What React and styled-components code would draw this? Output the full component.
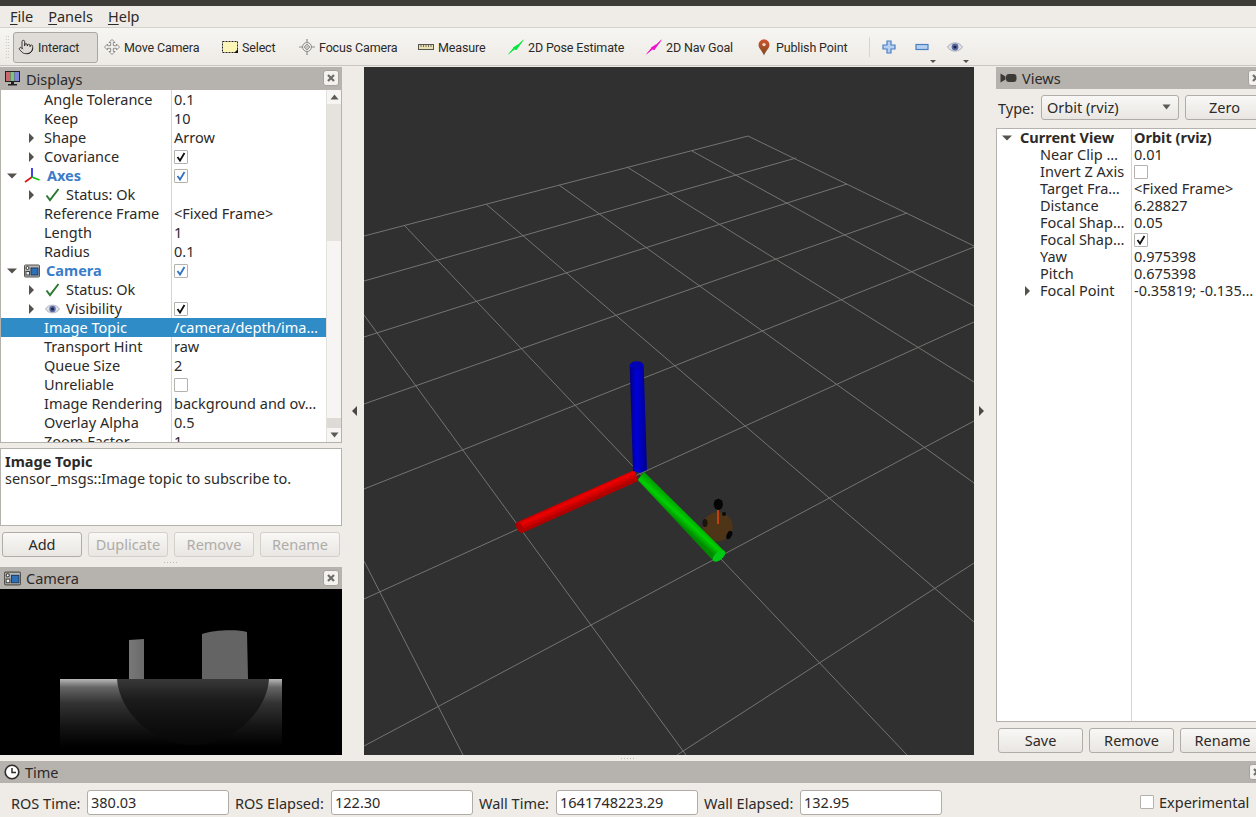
import React from "react";
import styled, { createGlobalStyle } from "styled-components";
import { Pointer } from "lucide-react";

const FONT = `"Noto Sans", "Open Sans", "Liberation Sans", sans-serif`;

const GlobalStyle = createGlobalStyle`
  html, body {
    margin: 0;
    background: #efece7;
  }
`;

const Window = styled.div`
  width: 1256px;
  height: 817px;
  overflow: hidden;
  display: flex;
  flex-direction: column;
  background: #efece7;
  color: #2c2a28;
  font-family: ${FONT};
  font-size: 14.5px;
`;

const TitleStrip = styled.div`
  height: 6px;
  flex: none;
  background: #3d3c37;
`;

const MenuBar = styled.div`
  height: 22px;
  box-sizing: border-box;
  flex: none;
  display: flex;
  align-items: center;
  gap: 15px;
  padding-left: 10px;
  border-bottom: 1px solid #d6d3ce;
  line-height: 21px;
`;

const Mnemonic = styled.span`
  text-decoration: underline;
  text-underline-offset: 2px;
`;

const Toolbar = styled.div`
  height: 38px;
  box-sizing: border-box;
  flex: none;
  display: flex;
  align-items: center;
  padding: 1px 0 0 5px;
  background: linear-gradient(#f7f5f2, #eeebe6);
  border-bottom: 1px solid #c9c5c0;
  font-family: Roboto, ${FONT};
  font-size: 12.5px;
  letter-spacing: -0.15px;
`;

const Grip = styled.div`
  width: 4px;
  height: 24px;
  margin-right: 4px;
  background-image: radial-gradient(#bdb9b4 0.7px, transparent 0.8px);
  background-size: 2.5px 3px;
`;

const ToolButton = styled.div`
  width: ${(p) => p.$w}px;
  height: ${(p) => (p.$active ? 31 : 30)}px;
  box-sizing: border-box;
  flex: none;
  display: flex;
  align-items: center;
  gap: 4px;
  padding-left: ${(p) => (p.$active ? 4 : 5)}px;
  border: ${(p) => (p.$active ? "1px solid #aaa7a2" : "none")};
  border-radius: 3px;
  background: ${(p) => (p.$active ? "#dfdcd8" : "transparent")};
  margin-right: ${(p) => (p.$active ? 1 : 0)}px;
  white-space: nowrap;
  svg {
    flex: none;
  }
`;

const ToolSeparator = styled.div`
  width: 1px;
  height: 20px;
  margin: 0 12px 0 5px;
  background: #d8d5d0;
`;

const ViewTool = styled.div`
  position: relative;
  width: ${(p) => p.$w}px;
  height: 30px;
  flex: none;
  display: flex;
  align-items: center;
`;

const DropMark = styled.span`
  position: absolute;
  right: ${(p) => p.$right}px;
  top: 28px;
  border-left: 3px solid transparent;
  border-right: 3px solid transparent;
  border-top: 3px solid #55524e;
`;

const Main = styled.div`
  height: 688px;
  flex: none;
  margin-top: 1px;
  display: flex;
`;

const LeftColumn = styled.div`
  width: 342px;
  flex: none;
  display: flex;
  flex-direction: column;
`;

const RightColumn = styled.div`
  width: 270px;
  flex: none;
  display: flex;
  flex-direction: column;
`;

const DockTitle = styled.div`
  height: ${(p) => p.$h || 22}px;
  flex: none;
  display: flex;
  align-items: center;
  gap: 5px;
  padding-left: 4px;
  background: #b6b2ae;
  position: relative;
`;

const CloseBox = styled.div`
  position: absolute;
  right: ${(p) => p.$right}px;
  top: 3px;
  width: 16px;
  height: 16px;
  box-sizing: border-box;
  display: flex;
  align-items: center;
  justify-content: center;
  background: #f4f2ef;
  border: 1px solid #a5a19c;
  border-radius: 3px;
`;

const TreeFrame = styled.div`
  height: 353px;
  flex: none;
  display: flex;
  box-sizing: border-box;
  border: solid #b5b2ad;
  border-width: 0 1px 1px 1px;
  background: #fff;
  overflow: hidden;
`;

const TreeBody = styled.div`
  flex: 1;
  min-width: 0;
  background: linear-gradient(#d8d5d1, #d8d5d1) 170px 0 / 1px 100% no-repeat;
`;

const Row = styled.div`
  height: 19px;
  line-height: 19px;
  display: grid;
  grid-template-columns: 170px 1fr;
  align-items: center;
  background: ${(p) => (p.$selected ? "#308cc6" : "transparent")};
  color: ${(p) => (p.$selected ? "#fff" : "inherit")};
  white-space: nowrap;
`;

const NameCell = styled.div`
  position: relative;
  display: flex;
  align-items: center;
  gap: ${(p) => p.$gap || 0}px;
  padding-left: ${(p) => p.$indent}px;
  font-weight: ${(p) => (p.$blue ? 700 : 400)};
  color: ${(p) => (p.$blue ? "#3b7cc9" : "inherit")};
`;

const ValueCell = styled.div`
  padding-left: 3px;
  display: flex;
  align-items: center;
  font-weight: ${(p) => (p.$bold ? 700 : 400)};
`;

const ExpandMark = styled.span`
  position: absolute;
  left: ${(p) => p.$left}px;
  top: 50%;
  transform: translateY(-50%);
  ${(p) =>
    p.$open
      ? `border-left: 5px solid transparent;
         border-right: 5px solid transparent;
         border-top: 5px solid #55524e;`
      : `border-top: 5px solid transparent;
         border-bottom: 5px solid transparent;
         border-left: 5px solid #55524e;`}
`;

const Box = styled.span`
  width: 14px;
  height: 14px;
  box-sizing: border-box;
  display: inline-flex;
  align-items: center;
  justify-content: center;
  background: #fff;
  border: 1px solid #b5b2ad;
  border-radius: 1px;
`;

const Scrollbar = styled.div`
  width: 14px;
  flex: none;
  display: flex;
  flex-direction: column;
  border-left: 1px solid #e4e1dd;
  background: #f6f5f3;
`;

const ScrollEnd = styled.div`
  height: 14px;
  flex: none;
  display: flex;
  align-items: center;
  justify-content: center;
`;

const ScrollThumb = styled.div`
  height: ${(p) => p.$h}px;
  flex: none;
  background: ${(p) => p.$color};
`;

const ScrollTrack = styled.div`
  flex: 1;
`;

const Description = styled.div`
  height: 78px;
  flex: none;
  margin-top: 5px;
  box-sizing: border-box;
  padding: 4px 4px;
  background: #fff;
  border: 1px solid #b5b2ad;
  line-height: 17px;
`;

const Bold = styled.div`
  font-weight: 700;
`;

const ButtonRow = styled.div`
  display: flex;
  gap: 6px;
  padding: ${(p) => p.$pad};
  flex: none;
`;

const Button = styled.div`
  width: ${(p) => p.$w || 80}px;
  height: 25px;
  box-sizing: border-box;
  flex: none;
  display: flex;
  align-items: center;
  justify-content: center;
  padding-bottom: 2px;
  border: 1px solid ${(p) => (p.$disabled ? "#d3d0cb" : "#b0ada8")};
  border-radius: 3px;
  background: linear-gradient(#f9f8f6, #e9e6e2);
  color: ${(p) => (p.$disabled ? "#aeaca8" : "inherit")};
`;

const Splitter = styled.div`
  width: 22px;
  box-sizing: border-box;
  flex: none;
  display: flex;
  align-items: center;
  justify-content: ${(p) => (p.$pad ? "flex-start" : "center")};
  padding-left: ${(p) => p.$pad || 3}px;
`;

const SplitArrow = styled.span`
  border-top: 5px solid transparent;
  border-bottom: 5px solid transparent;
  ${(p) => (p.$right ? "border-left" : "border-right")}: 5px solid #4a4844;
`;

const ViewPort = styled.div`
  width: 610px;
  flex: none;
  background: #303030;
  svg {
    display: block;
  }
`;

const HGrip = styled.div`
  height: ${(p) => p.$h}px;
  flex: none;
  display: flex;
  align-items: center;
  justify-content: center;
  &::after {
    content: "";
    width: 16px;
    height: 1px;
    background-image: radial-gradient(#bdb9b4 0.7px, transparent 0.8px);
    background-size: 3px 1px;
  }
`;

const DepthImage = styled.div`
  height: 166px;
  flex: none;
  background: #000;
  svg {
    display: block;
  }
`;

const TypeRow = styled.div`
  height: 37px;
  flex: none;
  display: flex;
  align-items: center;
  padding: 0 0 0 2px;
`;

const TypeLabel = styled.span`
  width: 43px;
  flex: none;
`;

const Combo = styled.div`
  width: 138px;
  height: 25px;
  box-sizing: border-box;
  flex: none;
  display: flex;
  align-items: center;
  justify-content: space-between;
  padding: 0 7px 2px 5px;
  margin-right: 6px;
  border: 1px solid #b0ada8;
  border-radius: 3px;
  background: linear-gradient(#f9f8f6, #e9e6e2);
`;

const ViewsTree = styled.div`
  flex: 1;
  margin-top: 2px;
  box-sizing: border-box;
  border: 1px solid #b5b2ad;
  border-right: none;
  background: linear-gradient(#d8d5d1, #d8d5d1) 134px 0 / 1px 100% no-repeat #fff;
`;

const ViewRow = styled.div`
  height: 17px;
  line-height: 17px;
  display: grid;
  grid-template-columns: 134px 1fr;
  align-items: center;
  white-space: nowrap;
`;

const TimeBar = styled.div`
  height: 34px;
  box-sizing: border-box;
  flex: none;
  display: flex;
  align-items: center;
  padding: 4px 0 0 11px;
`;

const FieldLabel = styled.span`
  width: ${(p) => p.$w}px;
  flex: none;
  padding-top: 1px;
  white-space: nowrap;
`;

const FieldInput = styled.div`
  width: 142px;
  height: 25px;
  box-sizing: border-box;
  flex: none;
  margin-right: 6px;
  padding-left: 3px;
  line-height: 23px;
  background: #fff;
  border: 1px solid #b0ada8;
  border-radius: 3px;
`;

const Experimental = styled.label`
  display: flex;
  align-items: center;
  gap: 5px;
  margin-left: 192px;
  white-space: nowrap;
`;

const Check = ({ color = "#111" }) => (
  <svg width="12" height="12" viewBox="0 0 12 12">
    <path d="M2.5 6 L5 9.5 L9.5 2" fill="none" stroke={color} strokeWidth="1.8" />
  </svg>
);

const CloseGlyph = () => (
  <svg width="10" height="10" viewBox="0 0 10 10">
    <path d="M2 2 L8 8 M8 2 L2 8" stroke="#6f6c68" strokeWidth="2.2" />
  </svg>
);

const MonitorIcon = () => (
  <svg width="17" height="17" viewBox="0 0 17 17">
    <rect x="1" y="1" width="15" height="11" fill="#222" />
    <rect x="2" y="2" width="4.5" height="9" fill="#c7696f" />
    <rect x="6.5" y="2" width="4" height="9" fill="#7dc47f" />
    <rect x="10.5" y="2" width="4.5" height="9" fill="#7f86d8" />
    <path d="M7 12h3v2h3v1.5H4V14h3z" fill="#222" />
  </svg>
);

const CameraIcon = ({ size = 16 }) => (
  <svg width={size} height={size} viewBox="0 0 16 16">
    <rect x="0.5" y="2" width="15" height="12" rx="1" fill="#b9b7b3" stroke="#55534f" />
    <rect x="7" y="5" width="7" height="7" fill="#2f6fb5" stroke="#1d3d63" />
    <circle cx="3.5" cy="5" r="1.5" fill="#fff" stroke="#333" />
    <rect x="2" y="8.5" width="3.5" height="3.5" fill="#eee" stroke="#444" />
  </svg>
);

const AxesIcon = () => (
  <svg width="17" height="17" viewBox="0 0 17 17">
    <path d="M8 10 L8 1" stroke="#1616e0" strokeWidth="1.6" />
    <path d="M8 10 L1 15" stroke="#e01010" strokeWidth="1.6" />
    <path d="M8 10 L15.5 13" stroke="#10c010" strokeWidth="1.6" />
  </svg>
);

const StatusCheck = () => (
  <svg width="15" height="15" viewBox="0 0 15 15">
    <path d="M1.5 8.5 L5 13 L13.5 2" fill="none" stroke="#2c7a32" strokeWidth="2" />
  </svg>
);

const EyeIcon = ({ w = 16 }) => (
  <svg width={w} height="12" viewBox="0 0 16 12">
    <path d="M0.5 6 C4 0.5 12 0.5 15.5 6 C12 11.5 4 11.5 0.5 6z" fill="#dfe1e8" stroke="#a9adba" />
    <circle cx="8" cy="6" r="3.4" fill="#5a6aa5" />
    <circle cx="8" cy="6" r="1.6" fill="#1d2440" />
  </svg>
);

const MoveIcon = () => (
  <svg width="16" height="16" viewBox="0 0 16 16">
    <path
      d="M8 .5 L11 3.5 H9.3 V6.7 H12.5 V5 L15.5 8 L12.5 11 V9.3 H9.3 V12.5 H11 L8 15.5 L5 12.5 H6.7 V9.3 H3.5 V11 L.5 8 L3.5 5 V6.7 H6.7 V3.5 H5z"
      fill="#f4f4f2"
      stroke="#85837f"
      strokeWidth="0.9"
    />
  </svg>
);

const SelectIcon = () => (
  <svg width="16" height="16" viewBox="0 0 16 16">
    <rect x="0.5" y="2.5" width="15" height="11" fill="#fbf6b8" stroke="#222" strokeDasharray="2 1" />
    <path d="M12 14 L16 14 L16 10z" fill="#111" />
  </svg>
);

const FocusIcon = () => (
  <svg width="16" height="16" viewBox="0 0 16 16">
    <path d="M8 0 L8 16 M0 8 L16 8" stroke="#8d8b87" strokeWidth="1.2" />
    <circle cx="8" cy="8" r="4.5" fill="#eeeeec" stroke="#8d8b87" />
    <path d="M8 5 L11 8 L8 11 L5 8z" fill="#c5c3bf" stroke="#85837f" strokeWidth="0.7" />
  </svg>
);

const MeasureIcon = () => (
  <svg width="16" height="16" viewBox="0 0 16 16">
    <rect x="0.5" y="5.5" width="15" height="5" fill="#e9dfb0" stroke="#55534f" />
    <path d="M3 6 V8 M5.5 6 V8 M8 6 V8 M10.5 6 V8 M13 6 V8" stroke="#55534f" strokeWidth="0.8" />
  </svg>
);

const ArrowIcon = ({ color }) => (
  <svg width="16" height="16" viewBox="0 0 16 16">
    <path d="M0.5 15 L6 8 L6.5 10 L13 3 L15.5 1 L13.5 4 L8.5 11 L6.5 10.5z" fill={color} />
    <path d="M0.5 15 L15.5 1" stroke={color} strokeWidth="0.9" />
    <path d="M5 8.5 L10.5 5 L8 11z" fill={color} />
  </svg>
);

const PinIcon = () => (
  <svg width="16" height="17" viewBox="0 0 16 17">
    <defs>
      <linearGradient id="pinFill" x1="0" y1="0" x2="0" y2="1">
        <stop offset="0" stopColor="#d0532b" />
        <stop offset="1" stopColor="#7a4a22" />
      </linearGradient>
    </defs>
    <path d="M8 16.5 C6 11.5 2.5 9.5 2.5 5.8 A5.5 5.5 0 0 1 13.5 5.8 C13.5 9.5 10 11.5 8 16.5z" fill="url(#pinFill)" />
    <circle cx="8" cy="5.6" r="1.7" fill="#f0d8c8" />
  </svg>
);

const PlusIcon = () => (
  <svg width="14" height="14" viewBox="0 0 14 14">
    <path d="M5 1 H9 V5 H13 V9 H9 V13 H5 V9 H1 V5 H5z" fill="#b5d0f0" stroke="#4a7fc0" strokeWidth="1.2" />
  </svg>
);

const MinusIcon = () => (
  <svg width="14" height="8" viewBox="0 0 14 8">
    <rect x="1" y="1.5" width="12" height="5" fill="#b5d0f0" stroke="#4a7fc0" strokeWidth="1.2" />
  </svg>
);

const SmallTriangle = ({ up }) => (
  <svg width="9" height="6" viewBox="0 0 9 6">
    <path d={up ? "M0.5 5.5 L4.5 0.5 L8.5 5.5z" : "M0.5 0.5 L4.5 5.5 L8.5 0.5z"} fill="#5c5a56" />
  </svg>
);

const VideoIcon = () => (
  <svg width="17" height="12" viewBox="0 0 17 12">
    <path d="M0.5 1.5 L5.5 4.5 V7.5 L0.5 10.5z" fill="#3b3a37" />
    <rect x="6" y="2" width="10.5" height="8" rx="3" fill="#3b3a37" />
  </svg>
);

const ClockIcon = () => (
  <svg width="16" height="16" viewBox="0 0 16 16">
    <circle cx="8" cy="8" r="6.8" fill="#fff" stroke="#2f2e2b" strokeWidth="1.6" />
    <path d="M8 4 V8.5 H12" fill="none" stroke="#2f2e2b" strokeWidth="1.5" />
  </svg>
);

const GridLines = [
  [364, 236, 748, 136],
  [364, 281, 796, 158],
  [364, 337, 847, 184],
  [364, 404, 907, 213],
  [364, 489, 974, 247],
  [364, 599, 974, 322],
  [364, 746, 974, 421],
  [677, 755, 974, 563],
  [748, 136, 974, 246],
  [692, 151, 974, 306],
  [627, 167, 974, 382],
  [559, 185, 974, 483],
  [486, 204, 974, 622],
  [404, 225, 907, 755],
  [364, 315, 686, 755],
  [364, 561, 463, 755],
];

const Scene = () => (
  <svg width="610" height="688" viewBox="364 67 610 688">
    <defs>
      <linearGradient id="blueAxis" x1="0" y1="0" x2="1" y2="0">
        <stop offset="0" stopColor="#000080" />
        <stop offset="0.4" stopColor="#0000d8" />
        <stop offset="1" stopColor="#000090" />
      </linearGradient>
      <linearGradient id="redAxis" gradientUnits="userSpaceOnUse" x1="574" y1="494" x2="579" y2="505">
        <stop offset="0" stopColor="#a00000" />
        <stop offset="0.45" stopColor="#f00000" />
        <stop offset="1" stopColor="#b00000" />
      </linearGradient>
      <linearGradient id="greenAxis" gradientUnits="userSpaceOnUse" x1="684" y1="510" x2="675" y2="520">
        <stop offset="0" stopColor="#00a000" />
        <stop offset="0.5" stopColor="#00d000" />
        <stop offset="1" stopColor="#008a00" />
      </linearGradient>
    </defs>
    {GridLines.map(([x1, y1, x2, y2]) => (
      <line key={`${x1}-${y1}`} x1={x1} y1={y1} x2={x2} y2={y2} stroke="#747472" strokeWidth="1" />
    ))}
    <ellipse cx="717.7" cy="526.7" rx="15" ry="14.5" fill="#4f3517" />
    <ellipse cx="729.3" cy="535" rx="2.6" ry="4.5" transform="rotate(25 729.3 535)" fill="#050505" />
    <ellipse cx="705" cy="523" rx="2.5" ry="4" fill="#1c130a" />
    <circle cx="724" cy="514" r="2" fill="#0a0a0a" />
    <rect x="717" y="510" width="2" height="14" fill="#c0400f" />
    <ellipse cx="718.3" cy="504.3" rx="4.6" ry="5.6" fill="#050505" />
    <polygon points="637.7,480 644,471.7 725,551.7 713.3,560.7" fill="url(#greenAxis)" />
    <ellipse cx="719" cy="556" rx="7.5" ry="4" transform="rotate(-40 719 556)" fill="#00c814" />
    <polygon points="516.7,522.3 522.7,532.7 638.3,481 634.3,470" fill="url(#redAxis)" />
    <ellipse cx="519.7" cy="527.5" rx="3" ry="6" transform="rotate(-28 519.7 527.5)" fill="#b00000" />
    <polygon points="629.7,366 643.7,366 647,470 640,473 633,471" fill="url(#blueAxis)" />
    <ellipse cx="636.7" cy="365.5" rx="7" ry="4.3" fill="#0000b4" />
  </svg>
);

const Depth = () => (
  <svg width="342" height="166" viewBox="0 589 342 166">
    <defs>
      <linearGradient id="band" x1="0" y1="0" x2="0" y2="1">
        <stop offset="0" stopColor="#b8b8b8" />
        <stop offset="0.12" stopColor="#666" />
        <stop offset="0.35" stopColor="#333" />
        <stop offset="0.7" stopColor="#141414" />
        <stop offset="1" stopColor="#000" />
      </linearGradient>
      <linearGradient id="bowl" x1="0" y1="0" x2="0" y2="1">
        <stop offset="0" stopColor="#383838" />
        <stop offset="0.3" stopColor="#1c1c1c" />
        <stop offset="0.7" stopColor="#0e0e0e" />
        <stop offset="1" stopColor="#060606" />
      </linearGradient>
      <linearGradient id="post" x1="0" y1="0" x2="1" y2="0">
        <stop offset="0" stopColor="#787878" />
        <stop offset="1" stopColor="#6a6a6a" />
      </linearGradient>
    </defs>
    <path d="M129 640 L144 639 V679 H129z" fill="url(#post)" />
    <path d="M202 634 C212 630 238 629 247 632 L248 679 H202z" fill="#646464" />
    <rect x="60" y="679" width="222" height="68" fill="url(#band)" />
    <path d="M117 679 H269 C267 712 232 745 193 745 C154 745 119 712 117 679z" fill="url(#bowl)" />
  </svg>
);

const DISPLAY_ROWS = [
  { name: "Angle Tolerance", value: "0.1" },
  { name: "Keep", value: "10" },
  { name: "Shape", value: "Arrow", expand: true },
  { name: "Covariance", check: true, expand: true },
  { name: "Axes", check: "blue", top: true, icon: <AxesIcon /> },
  { name: "Status: Ok", expand: true, status: <StatusCheck /> },
  { name: "Reference Frame", value: "<Fixed Frame>" },
  { name: "Length", value: "1" },
  { name: "Radius", value: "0.1" },
  { name: "Camera", check: "blue", top: true, icon: <CameraIcon /> },
  { name: "Status: Ok", expand: true, status: <StatusCheck /> },
  { name: "Visibility", check: true, expand: true, status: <EyeIcon w={15} /> },
  { name: "Image Topic", value: "/camera/depth/ima…", selected: true },
  { name: "Transport Hint", value: "raw" },
  { name: "Queue Size", value: "2" },
  { name: "Unreliable", check: "empty" },
  { name: "Image Rendering", value: "background and ov…" },
  { name: "Overlay Alpha", value: "0.5" },
  { name: "Zoom Factor", value: "1" },
];

const VIEW_ROWS = [
  { name: "Near Clip …", value: "0.01" },
  { name: "Invert Z Axis", check: "empty" },
  { name: "Target Fra…", value: "<Fixed Frame>" },
  { name: "Distance", value: "6.28827" },
  { name: "Focal Shap…", value: "0.05" },
  { name: "Focal Shap…", check: true },
  { name: "Yaw", value: "0.975398" },
  { name: "Pitch", value: "0.675398" },
  { name: "Focal Point", value: "-0.35819; -0.135…", expand: true },
];

const CheckValue = ({ kind }) => (
  <Box>
    {kind === true && <Check />}
    {kind === "blue" && <Check color="#2f72c0" />}
  </Box>
);

const DisplayRow = ({ row }) => {
  const indent = row.top ? 23 : row.status ? 44 : 43;
  return (
    <Row $selected={row.selected}>
      <NameCell $indent={indent} $blue={row.top} $gap={row.top || row.status ? 6 : 0}>
        {row.top && <ExpandMark $open $left={6} />}
        {row.expand && <ExpandMark $left={28} />}
        {row.icon}
        {row.status}
        <span>{row.name}</span>
      </NameCell>
      <ValueCell>{row.check ? <CheckValue kind={row.check} /> : row.value}</ValueCell>
    </Row>
  );
};

export default function App() {
  return (
    <Window>
      <GlobalStyle />
      <TitleStrip />
      <MenuBar>
        <span><Mnemonic>F</Mnemonic>ile</span>
        <span><Mnemonic>P</Mnemonic>anels</span>
        <span><Mnemonic>H</Mnemonic>elp</span>
      </MenuBar>
      <Toolbar>
        <Grip />
        <ToolButton $w={85} $active>
          <Pointer size={16} strokeWidth={1.3} color="#222" />
          Interact
        </ToolButton>
        <ToolButton $w={118}><MoveIcon />Move Camera</ToolButton>
        <ToolButton $w={77}><SelectIcon />Select</ToolButton>
        <ToolButton $w={119}><FocusIcon />Focus Camera</ToolButton>
        <ToolButton $w={90}><MeasureIcon />Measure</ToolButton>
        <ToolButton $w={138}><ArrowIcon color="#00e83c" />2D Pose Estimate</ToolButton>
        <ToolButton $w={110}><ArrowIcon color="#f012d2" />2D Nav Goal</ToolButton>
        <ToolButton $w={113}><PinIcon />Publish Point</ToolButton>
        <ToolSeparator />
        <ViewTool $w={33}><PlusIcon /></ViewTool>
        <ViewTool $w={32}><MinusIcon /><DropMark $right={11} /></ViewTool>
        <ViewTool $w={25}><EyeIcon /><DropMark $right={3} /></ViewTool>
      </Toolbar>
      <Main>
        <LeftColumn>
          <DockTitle $h={23}>
            <MonitorIcon />
            Displays
            <CloseBox $right={3}><CloseGlyph /></CloseBox>
          </DockTitle>
          <TreeFrame>
            <TreeBody>
              {DISPLAY_ROWS.map((row, i) => (
                <DisplayRow key={i} row={row} />
              ))}
            </TreeBody>
            <Scrollbar>
              <ScrollEnd><SmallTriangle up /></ScrollEnd>
              <ScrollThumb $h={137} $color="#e6e3df" />
              <ScrollTrack />
              <ScrollThumb $h={10} $color="#dedbd7" />
              <ScrollEnd><SmallTriangle /></ScrollEnd>
            </Scrollbar>
          </TreeFrame>
          <Description>
            <Bold>Image Topic</Bold>
            sensor_msgs::Image topic to subscribe to.
          </Description>
          <ButtonRow $pad="6px 2px 0">
            <Button>Add</Button>
            <Button $disabled>Duplicate</Button>
            <Button $disabled>Remove</Button>
            <Button $disabled>Rename</Button>
          </ButtonRow>
          <HGrip $h={10} />
          <DockTitle>
            <CameraIcon size={17} />
            Camera
            <CloseBox $right={3}><CloseGlyph /></CloseBox>
          </DockTitle>
          <DepthImage><Depth /></DepthImage>
        </LeftColumn>
        <Splitter><SplitArrow /></Splitter>
        <ViewPort><Scene /></ViewPort>
        <Splitter $pad={5}><SplitArrow $right /></Splitter>
        <RightColumn>
          <DockTitle>
            <VideoIcon />
            Views
            <CloseBox $right={2}><CloseGlyph /></CloseBox>
          </DockTitle>
          <TypeRow>
            <TypeLabel>Type:</TypeLabel>
            <Combo>Orbit (rviz)<SmallTriangle /></Combo>
            <Button $w={79}>Zero</Button>
          </TypeRow>
          <ViewsTree>
            <ViewRow>
              <NameCell $indent={23} $gap={0}>
                <ExpandMark $open $left={5} />
                <Bold>Current View</Bold>
              </NameCell>
              <ValueCell $bold>Orbit (rviz)</ValueCell>
            </ViewRow>
            {VIEW_ROWS.map((row, i) => (
              <ViewRow key={i}>
                <NameCell $indent={43}>
                  {row.expand && <ExpandMark $left={28} />}
                  <span>{row.name}</span>
                </NameCell>
                <ValueCell>{row.check ? <CheckValue kind={row.check} /> : row.value}</ValueCell>
              </ViewRow>
            ))}
          </ViewsTree>
          <ButtonRow $pad="6px 0 2px 2px">
            <Button $w={85}>Save</Button>
            <Button $w={85}>Remove</Button>
            <Button $w={85}>Rename</Button>
          </ButtonRow>
        </RightColumn>
      </Main>
      <HGrip $h={6} />
      <DockTitle>
        <ClockIcon />
        Time
        <CloseBox $right={-9}><CloseGlyph /></CloseBox>
      </DockTitle>
      <TimeBar>
        <FieldLabel $w={76}>ROS Time:</FieldLabel>
        <FieldInput>380.03</FieldInput>
        <FieldLabel $w={96}>ROS Elapsed:</FieldLabel>
        <FieldInput>122.30</FieldInput>
        <FieldLabel $w={77}>Wall Time:</FieldLabel>
        <FieldInput>1641748223.29</FieldInput>
        <FieldLabel $w={96}>Wall Elapsed:</FieldLabel>
        <FieldInput>132.95</FieldInput>
        <Experimental>
          <Box />
          Experimental
        </Experimental>
      </TimeBar>
    </Window>
  );
}
